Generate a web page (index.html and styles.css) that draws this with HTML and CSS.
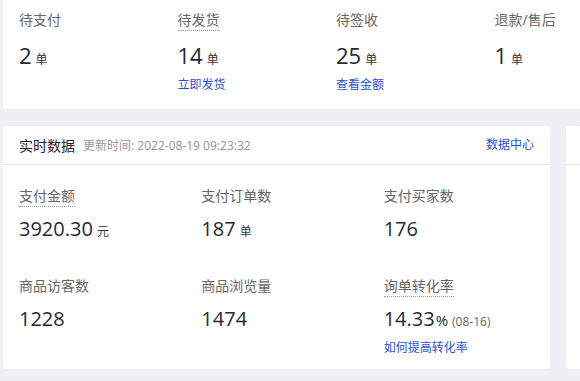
FILE: index.html
```html
<!DOCTYPE html>
<html>

<head>
    <meta name="viewport" content="width=device-width, initial-scale=1.0" charset="utf-8">
    <title>数据概览</title>
    <link rel="stylesheet" href="styles.css">
</head>

<body>
    <div class="card orders">
        <div class="order">
            <span class="label">待支付</span>
            <div class="value">2<span class="unit">单</span></div>
        </div>
        <div class="order">
            <span class="label dotted">待发货</span>
            <div class="value">14<span class="unit">单</span></div>
            <a class="link">立即发货</a>
        </div>
        <div class="order">
            <span class="label">待签收</span>
            <div class="value">25<span class="unit">单</span></div>
            <a class="link">查看金额</a>
        </div>
        <div class="order">
            <span class="label">退款/售后</span>
            <div class="value">1<span class="unit">单</span></div>
        </div>
    </div>

    <div class="row">
        <div class="card realtime">
            <div class="card-head">
                <span class="title">实时数据</span>
                <span class="updated">更新时间: 2022-08-19 09:23:32</span>
                <a class="link more">数据中心</a>
            </div>
            <div class="stats">
                <div class="stat">
                    <span class="label dotted">支付金额</span>
                    <div class="value">3920.30<span class="unit">元</span></div>
                </div>
                <div class="stat">
                    <span class="label">支付订单数</span>
                    <div class="value">187<span class="unit">单</span></div>
                </div>
                <div class="stat">
                    <span class="label">支付买家数</span>
                    <div class="value">176</div>
                </div>
                <div class="stat">
                    <span class="label">商品访客数</span>
                    <div class="value">1228</div>
                </div>
                <div class="stat">
                    <span class="label">商品浏览量</span>
                    <div class="value">1474</div>
                </div>
                <div class="stat">
                    <span class="label dotted">询单转化率</span>
                    <div class="value">14.33<span class="pct">%</span><span class="date">(08-16)</span></div>
                    <a class="link">如何提高转化率</a>
                </div>
            </div>
        </div>
        <div class="card side">
            <div class="card-head"></div>
        </div>
    </div>
</body>
</html>
```

FILE: styles.css
```css
* {
  box-sizing: border-box;
}
body {
  margin: 0;
  padding: 0 0 0 3px;
  background-color: #eef0f4;
  font-family: "Noto Sans", "Noto Sans CJK SC", sans-serif;
  color: #333;
  overflow: hidden;
  width: 580px;
  height: 381px;
}
.card {
  background-color: #fff;
  border-radius: 4px;
  flex-shrink: 0;
}
a.link {
  display: block;
  width: fit-content;
  font-size: 12px;
  line-height: 18px;
  color: #2a52cf;
  text-decoration: none;
  cursor: pointer;
}
.label {
  display: block;
  width: fit-content;
  font-size: 14px;
  line-height: 20px;
  color: #666;
  border-bottom: 1px dotted transparent;
}
.label.dotted {
  border-bottom-color: #999;
}
.value {
  font-family: "Open Sans", "Noto Sans CJK SC", sans-serif;
  font-weight: 500;
  color: #252933;
  white-space: nowrap;
}
.unit {
  font-family: "Noto Sans CJK SC", sans-serif;
  font-size: 12px;
  font-weight: 400;
  margin-left: 4px;
  color: #333;
}

/* top order strip */
.orders {
  display: flex;
  width: 634px;
  height: 109px;
  padding-top: 10px;
  border-radius: 0 0 4px 4px;
}
.order {
  width: 158.5px;
  padding-left: 16px;
}
.order .value {
  font-size: 22px;
  line-height: 28px;
  margin-top: 10px;
}
.order .link {
  margin-top: 3px;
}

/* realtime data */
.row {
  display: flex;
  gap: 16px;
  margin-top: 17px;
}
.realtime {
  width: 547px;
  height: 243px;
}
.side {
  width: 300px;
  height: 243px;
}
.card-head {
  display: flex;
  align-items: center;
  height: 39px;
  padding: 0 16px;
  border-bottom: 1px solid #e8e9ed;
}
.title {
  font-size: 14px;
  color: #1f2329;
}
.updated {
  margin-left: 8px;
  font-size: 12px;
  color: #999;
}
.more {
  margin-left: auto;
}
.stats {
  display: grid;
  grid-template-columns: repeat(3, 1fr);
  row-gap: 32px;
  padding-top: 21px;
}
.stat {
  padding-left: 16px;
}
.stat .value {
  font-size: 20px;
  line-height: 26px;
  margin-top: 9px;
}
.stat .link {
  margin-top: 4px;
}
.pct {
  font-size: 15px;
  font-weight: 400;
  margin-left: 1px;
}
.date {
  font-size: 12px;
  font-weight: 400;
  color: #666;
  margin-left: 4px;
}
```
